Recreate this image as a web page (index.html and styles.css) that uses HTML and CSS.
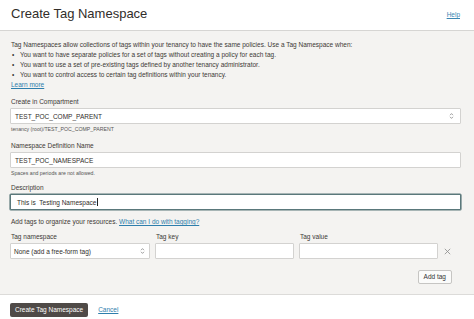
FILE: index.html
```html
<!DOCTYPE html>
<html>
<head>
<meta charset="utf-8">
<link rel="stylesheet" href="styles.css">
</head>
<body>
<header class="hdr">
  <h1 class="title">Create Tag Namespace</h1>
  <a class="help">Help</a>
</header>
<main class="panel">
  <div class="intro">
    <p class="line">Tag Namespaces allow collections of tags within your tenancy to have the same policies. Use a Tag Namespace when:</p>
    <ul class="bullets">
      <li class="line"><span class="dot">•</span>You want to have separate policies for a set of tags without creating a policy for each tag.</li>
      <li class="line"><span class="dot">•</span>You want to use a set of pre-existing tags defined by another tenancy administrator.</li>
      <li class="line"><span class="dot">•</span>You want to control access to certain tag definitions within your tenancy.</li>
    </ul>
    <div class="line"><a class="link">Learn more</a></div>
  </div>

  <div class="field f1">
    <div class="label">Create in Compartment</div>
    <div class="input select">
      <span class="val">TEST_POC_COMP_PARENT</span>
      <svg class="arrows" width="5" height="8" viewBox="0 0 5 8"><path d="M1 3.2 L2.5 1.6 L4 3.2 M1 4.8 L2.5 6.4 L4 4.8" fill="none" stroke="#777" stroke-width="0.7"/></svg>
    </div>
    <div class="hint">tenancy (root)/TEST_POC_COMP_PARENT</div>
  </div>

  <div class="field f2">
    <div class="label">Namespace Definition Name</div>
    <div class="input"><span class="val">TEST_POC_NAMESPACE</span></div>
    <div class="hint">Spaces and periods are not allowed.</div>
  </div>

  <div class="field f3">
    <div class="label">Description</div>
    <div class="input focus"><span class="val">This is&nbsp; Testing Namespace</span><span class="caret"></span></div>
  </div>

  <div class="addtext">Add tags to organize your resources. <a class="link">What can I do with tagging?</a></div>

  <div class="tagrow">
    <div class="tcell">
      <div class="label">Tag namespace</div>
      <div class="input select">
        <span class="val">None (add a free-form tag)</span>
        <svg class="arrows" width="5" height="8" viewBox="0 0 5 8"><path d="M1 3.2 L2.5 1.6 L4 3.2 M1 4.8 L2.5 6.4 L4 4.8" fill="none" stroke="#777" stroke-width="0.7"/></svg>
      </div>
    </div>
    <div class="tcell">
      <div class="label">Tag key</div>
      <div class="input"></div>
    </div>
    <div class="tcell">
      <div class="label">Tag value</div>
      <div class="input"></div>
    </div>
    <div class="remove">
      <svg width="7" height="7" viewBox="0 0 7 7"><path d="M0.8 0.8 L6.2 6.2 M6.2 0.8 L0.8 6.2" stroke="#8a8a8a" stroke-width="0.8" fill="none"/></svg>
    </div>
  </div>

  <div class="addrow"><button class="btn-sec">Add tag</button></div>
</main>
<footer class="foot">
  <button class="btn-pri">Create Tag Namespace</button>
  <a class="link cancel">Cancel</a>
</footer>
</body>
</html>
```
FILE: styles.css
```css
* { box-sizing: border-box; }
html, body { margin: 0; padding: 0; }
body {
  width: 474px;
  height: 319px;
  overflow: hidden;
  font-family: "Liberation Sans", Arial, sans-serif;
  color: #3d3935;
  background: #fff;
}
.hdr {
  height: 31px;
  background: #fff;
  border-bottom: 1px solid #d6d5d3;
  display: flex;
  justify-content: space-between;
  align-items: flex-start;
  padding: 0 14px 0 11px;
}
.title {
  margin: 0;
  font-size: 13px;
  font-weight: normal;
  line-height: 28px;
  color: #312d2a;
}
.help {
  font-size: 6.5px;
  line-height: 8px;
  margin-top: 11px;
  color: #3b86b2;
  text-decoration: underline;
}
.panel {
  background: #f4f3f1;
  padding: 9px 13px 10px 10px;
}
.intro { padding-left: 1px; font-size: 6.5px; }
.line { margin: 0; line-height: 10px; }
.bullets { margin: 0; padding: 0; list-style: none; }
.bullets .line { display: flex; }
.dot { width: 9px; padding-left: 1px; }
.link { color: #2e7eac; text-decoration: underline; }
.field { }
.f1 { margin-top: 8px; }
.f2 { margin-top: 9px; }
.f3 { margin-top: 7px; }
.label {
  font-size: 6.5px;
  line-height: 8px;
  margin-bottom: 2px;
  padding-left: 1px;
  color: #3d3935;
}
.input {
  height: 16px;
  background: #fff;
  border: 1px solid #d3d2d0;
  border-radius: 1px;
  display: flex;
  align-items: center;
  padding: 0 4px;
  font-size: 6.5px;
  color: #312d2a;
}
.select { justify-content: space-between; padding-right: 6px; }
.select .val { padding-left: 0; }
.arrows { display: block; }
.focus {
  border: 1px solid #5a787b;
  box-shadow: 0 0 0 0.6px #5a787b;
  padding-left: 6px;
  justify-content: flex-start;
}
.caret {
  display: inline-block;
  width: 0.8px;
  height: 8px;
  background: #222;
  margin-left: 0.5px;
}
.hint {
  font-size: 5.2px;
  line-height: 7px;
  margin-top: 2px;
  padding-left: 1px;
  color: #555;
}
.addtext {
  margin-top: 8px;
  font-size: 6.5px;
  line-height: 8px;
  padding-left: 1px;
}
.tagrow {
  margin-top: 7px;
  display: grid;
  grid-template-columns: 140px 139px 139px 9px;
  column-gap: 5px;
  align-items: end;
}
.tagrow .select { padding-left: 3px; padding-right: 4px; }
.remove {
  height: 16px;
  display: flex;
  align-items: center;
  justify-content: center;
}
.remove svg { display: block; }
.addrow {
  width: 442px;
  margin-top: 11px;
  display: flex;
  justify-content: flex-end;
}
.btn-sec {
  height: 14px;
  padding: 0 5px;
  border: 1px solid #c6c5c3;
  background: #fbfbfa;
  border-radius: 2px;
  font-family: "Liberation Sans", Arial, sans-serif;
  font-size: 6.5px;
  color: #333;
  line-height: 12px;
}
.foot {
  background: #fff;
  border-top: 1px solid #dcdbd9;
  padding: 7px 10px;
  display: flex;
  align-items: center;
  height: 30px;
}
.btn-pri {
  height: 14px;
  padding: 0 5px;
  border: none;
  background: #4f4a47;
  color: #fff;
  border-radius: 2px;
  font-family: "Liberation Sans", Arial, sans-serif;
  font-size: 6.5px;
  line-height: 14px;
}
.cancel { margin-left: 10px; font-size: 6.5px; }
```
